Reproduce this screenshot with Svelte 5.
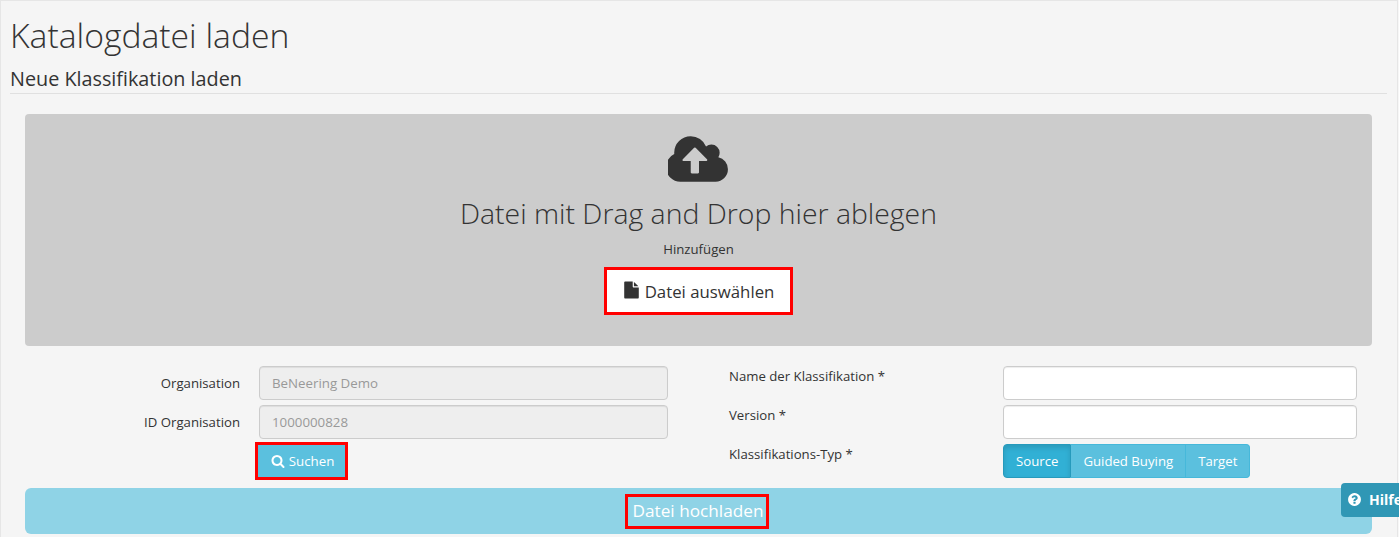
<script>
  const left = [
    { label: 'Organisation', value: 'BeNeering Demo' },
    { label: 'ID Organisation', value: '1000000828' }
  ];
  const right = ['Name der Klassifikation *', 'Version *'];
  const types = ['Source', 'Guided Buying', 'Target'];
</script>

<div class="page">
  <h1>Katalogdatei laden</h1>
  <h2>Neue Klassifikation laden</h2>

  <section class="drop">
    <svg class="cloud" viewBox="0 0 1920 1792" aria-hidden="true"><path d="M1216 864q0-14-9-23l-352-352q-9-9-23-9t-23 9l-351 351q-10 12-10 24 0 14 9 23t23 9h224v352q0 13 9.5 22.5t22.5 9.5h192q13 0 22.5-9.5t9.5-22.5v-352h224q13 0 22.5-9.5t9.5-22.5zm640 288q0 159-112.5 271.5t-271.5 112.5h-1088q-185 0-316.5-131.5t-131.5-316.5q0-130 70-240t188-165q-2-30-2-43 0-212 150-362t362-150q156 0 285.5 87t188.5 231q71-62 166-62 106 0 181 75t75 181q0 76-41 138 130 31 213.5 135.5t83.5 238.5z"/></svg>
    <div class="drop-title">Datei mit Drag and Drop hier ablegen</div>
    <div class="add">Hinzufügen</div>
    <button class="pick">
      <svg viewBox="0 0 1792 1792" aria-hidden="true"><path d="M1152 512v-472q22 14 36 28l408 408q14 14 28 36h-472zm-128 32q0 40 28 68t68 28h544v1056q0 40-28 68t-68 28h-1344q-40 0-68-28t-28-68v-1600q0-40 28-68t68-28h800v544z"/></svg>
      Datei auswählen
    </button>
  </section>

  <div class="form">
    <div class="col col-left">
      {#each left as f}
        <div class="row">
          <span class="label">{f.label}</span>
          <input class="input" disabled value={f.value} />
        </div>
      {/each}
      <div class="row">
        <span class="label"></span>
        <button class="search">
          <svg viewBox="0 0 1792 1792" aria-hidden="true"><path d="M1216 832q0-185-131.5-316.5t-316.5-131.5-316.5 131.5-131.5 316.5 131.5 316.5 316.5 131.5 316.5-131.5 131.5-316.5zm512 832q0 52-38 90t-90 38q-54 0-90-38l-343-342q-179 124-399 124-143 0-273.5-55.5t-225-150-150-225-55.5-273.5 55.5-273.5 150-225 225-150 273.5-55.5 273.5 55.5 225 150 150 225 55.5 273.5q0 220-124 399l343 343q37 37 37 90z"/></svg>
          Suchen
        </button>
      </div>
    </div>
    <div class="col col-right">
      {#each right as l}
        <div class="row">
          <span class="label">{l}</span>
          <input class="input" />
        </div>
      {/each}
      <div class="row">
        <span class="label">Klassifikations-Typ *</span>
        <div class="group">
          {#each types as t, i}
            <button class="seg" class:active={i === 0}>{t}</button>
          {/each}
        </div>
      </div>
    </div>
  </div>

  <div class="upload"><span>Datei hochladen</span></div>

  <div class="help">
    <svg viewBox="0 0 1792 1792" aria-hidden="true"><path d="M1024 1376v-192q0-14-9-23t-23-9h-192q-14 0-23 9t-9 23v192q0 14 9 23t23 9h192q14 0 23-9t9-23zm256-672q0-88-55.5-163t-138.5-116-170-41q-243 0-371 213-15 24 8 42l132 100q7 6 19 6 16 0 25-12 53-68 86-92 34-24 86-24 48 0 85.5 26t37.5 59q0 38-20 61t-68 45q-63 28-115.5 86.5t-52.5 125.5v36q0 14 9 23t23 9h192q14 0 23-9t9-23q0-19 21.5-49.5t54.5-49.5q32-18 49-28.5t46-35 44.5-48 28-60.5 12.5-81zm384 192q0 209-103 385.5t-279.5 279.5-385.5 103-385.5-103-279.5-279.5-103-385.5 103-385.5 279.5-279.5 385.5-103 385.5 103 279.5 279.5 103 385.5z"/></svg>
    <b>Hilfe</b>
  </div>
</div>

<style>
  :global(body) { margin: 0; background: #f7f7f7; overflow: hidden; }
  .page {
    box-sizing: border-box;
    width: 1398px;
    height: 537px;
    background: #f5f5f5;
    border: 1px solid #e6e6e6;
    border-bottom: 0;
    padding: 0 10px 0 9px;
    font-family: "Open Sans", "Noto Sans", sans-serif;
    color: #333;
    overflow: hidden;
  }
  h1 {
    margin: 0;
    padding-top: 13px;
    font-size: 33.7px;
    line-height: 42px;
    font-weight: 300;
  }
  h2 {
    margin: 11px 0 0;
    font-size: 19.8px;
    line-height: 24px;
    height: 24px;
    font-weight: 400;
    padding-bottom: 2px;
    border-bottom: 1px solid #e0e0e0;
  }
  .drop {
    margin: 20px 15px 0 15px;
    height: 232px;
    background: #ccc;
    border-radius: 4px;
    display: flex;
    flex-direction: column;
    align-items: center;
  }
  .cloud { width: 62px; height: 58px; margin-top: 18px; fill: #333; }
  .drop-title { margin-top: 4px; font-size: 28.4px; line-height: 38px; font-weight: 300; }
  .add { margin-top: 8px; font-size: 13.2px; line-height: 18px; }
  .pick {
    margin-top: 9px;
    width: 189px;
    height: 48px;
    background: #fff;
    border: 3px solid #f00;
    font: inherit;
    font-size: 16.8px;
    color: #333;
    display: flex;
    align-items: center;
    justify-content: center;
    gap: 5px;
    padding: 0;
  }
  .pick svg { width: 17px; height: 18px; fill: #333; margin-top: -3px; }
  .form {
    margin: 20px 15px 0 15px;
    display: grid;
    grid-template-columns: 704px 1fr;
  }
  .col { display: flex; flex-direction: column; gap: 5px; }
  .row { display: flex; align-items: flex-start; }
  .label { font-size: 13.2px; line-height: 18px; }
  .col-left .label { width: 215px; margin-right: 19px; text-align: right; padding-top: 8px; }
  .col-right .label { width: 274px; padding-top: 1px; }
  .input {
    box-sizing: border-box;
    height: 34px;
    padding: 6px 12px;
    border: 1px solid #ccc;
    border-radius: 4px;
    background: #fff;
    font: inherit;
    font-size: 13.3px;
    color: #999;
    box-shadow: inset 0 1px 1px rgba(0,0,0,.075);
    outline: 0;
  }
  .col-left .input { width: 409px; background: #eee; }
  .col-right .input { width: 354px; }
  .search {
    box-sizing: border-box;
    height: 38px;
    width: 93px;
    margin: -2px 0 -2px -4px;
    background: #5bc0de;
    border: 3px solid #f00;
    color: #fff;
    font: inherit;
    font-size: 13.3px;
    display: flex;
    align-items: center;
    justify-content: center;
    gap: 4px;
    padding: 0 0 0 2px;
  }
  .search svg { width: 14px; height: 14px; fill: #fff; }
  .group { display: flex; height: 34px; }
  .seg {
    box-sizing: border-box;
    height: 34px;
    background: #5bc0de;
    border: 1px solid #46b8da;
    border-left-width: 0;
    color: #fff;
    font: inherit;
    font-size: 13.2px;
    padding: 0 12px;
  }
  .seg:first-child { border-radius: 4px 0 0 4px; border-left-width: 1px; }
  .seg:last-child { border-radius: 0 4px 4px 0; }
  .seg.active { background: #31b0d5; border-color: #269abc; box-shadow: inset 0 3px 5px rgba(0,0,0,.125); }
  .upload {
    margin: 10px 15px 0 15px;
    height: 46px;
    background: #8fd3e6;
    border-radius: 6px;
    display: flex;
    align-items: center;
    justify-content: center;
  }
  .upload span {
    box-sizing: border-box;
    height: 35px;
    width: 144px;
    margin-left: -3px;
    padding-left: 2px;
    border: 3px solid #f00;
    color: #fff;
    font-size: 17.2px;
    line-height: 28px;
    text-align: center;
    white-space: nowrap;
  }
  .help {
    position: absolute;
    left: 1341px;
    top: 483px;
    width: 58px;
    height: 34px;
    background: #3097b5;
    border-radius: 4px 0 0 4px;
    color: #fff;
    display: flex;
    align-items: center;
    gap: 7px;
    padding: 0 0 2px 6px;
    box-sizing: border-box;
    overflow: hidden;
    font-size: 14px;
  }
  .help svg { width: 15px; height: 15px; fill: #fff; flex: none; }
</style>
